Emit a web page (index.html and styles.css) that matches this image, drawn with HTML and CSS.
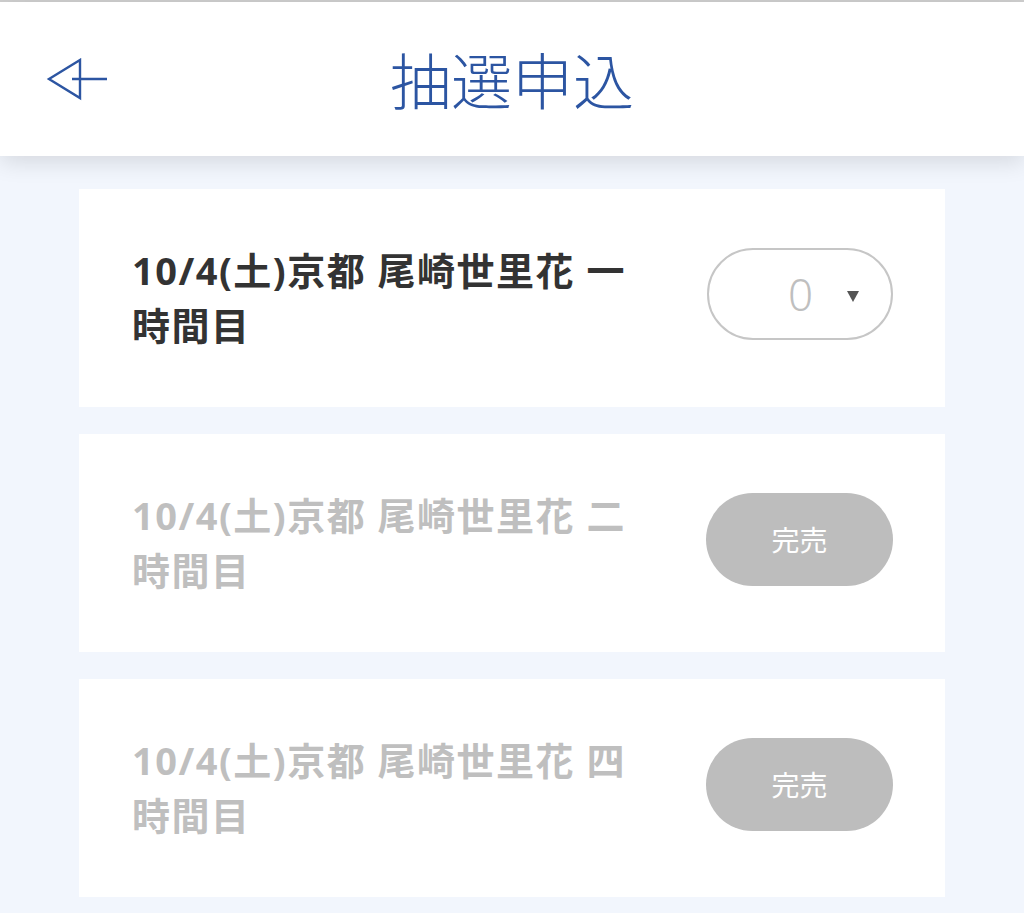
FILE: index.html
```html
<!DOCTYPE html>
<html lang="ja">
<head>
<meta charset="utf-8">
<link rel="stylesheet" href="styles.css">
</head>
<body>
<div class="topline"></div>
<header class="header">
  <button class="back" aria-label="戻る">
    <svg width="64" height="44" viewBox="0 0 64 44" fill="none" stroke="#2c55a2" stroke-width="2.4" stroke-linejoin="miter">
      <polygon points="3,21 34,2 34,40"/>
      <line x1="26" y1="21" x2="61" y2="21"/>
    </svg>
  </button>
  <h1 class="title">抽選申込</h1>
</header>
<main class="list">
  <section class="card">
    <p class="name">10/4(土)京都 尾崎世里花 一時間目</p>
    <div class="select"><span class="num">0</span><span class="caret"></span></div>
  </section>
  <section class="card disabled">
    <p class="name">10/4(土)京都 尾崎世里花 二時間目</p>
    <div class="sold">完売</div>
  </section>
  <section class="card disabled">
    <p class="name">10/4(土)京都 尾崎世里花 四時間目</p>
    <div class="sold">完売</div>
  </section>
</main>
</body>
</html>
```
FILE: styles.css
```css
html, body {
  margin: 0;
  padding: 0;
}
body {
  background: #f2f6fd;
  font-family: "Noto Sans CJK JP", "Noto Sans", sans-serif;
  width: 1024px;
  height: 913px;
  overflow: hidden;
}
.topline {
  height: 2px;
  background: #cfcfcf;
}
.header {
  position: relative;
  z-index: 2;
  height: 154px;
  background: #fff;
  box-shadow: 0 6px 22px rgba(0, 0, 0, 0.12);
  display: flex;
  align-items: center;
  justify-content: center;
}
.back {
  position: absolute;
  left: 46px;
  top: 56px;
  padding: 0;
  border: 0;
  background: none;
  width: 64px;
  height: 44px;
}
.back svg { display: block; }
.title {
  margin: 0;
  margin-top: -2px;
  font-size: 61px;
  font-weight: 300;
  color: #2c55a2;
  letter-spacing: 0;
  line-height: 1;
}
.list {
  padding: 33px 79px 0;
  display: flex;
  flex-direction: column;
  gap: 27px;
}
.card {
  background: #fff;
  height: 218px;
  box-sizing: border-box;
  padding: 0 52px 0 53px;
  display: flex;
  align-items: center;
}
.name {
  margin: 0;
  width: 510px;
  font-family: "Noto Sans", "Noto Sans CJK JP", sans-serif;
  font-size: 38px;
  font-weight: 700;
  letter-spacing: 1.5px;
  line-height: 55px;
  color: #333;
}
.disabled .name {
  color: #bfbfbf;
}
.select {
  margin-left: auto;
  margin-top: -8px;
  width: 186px;
  height: 92px;
  box-sizing: border-box;
  border: 2px solid #c6c6c6;
  border-radius: 46px;
  display: flex;
  align-items: center;
  justify-content: flex-end;
  padding-right: 32px;
}
.num {
  font-family: "Noto Sans", sans-serif;
  font-weight: 300;
  font-size: 44px;
  color: #bfbfbf;
  line-height: 1;
  margin-right: 34px;
}
.caret {
  width: 0;
  height: 0;
  border-left: 6px solid transparent;
  border-right: 6px solid transparent;
  border-top: 11px solid #555;
  margin-top: 4px;
}
.sold {
  margin-left: auto;
  margin-top: -8px;
  width: 187px;
  height: 93px;
  border-radius: 47px;
  background: #bdbdbd;
  color: #fff;
  font-size: 28px;
  display: flex;
  align-items: center;
  justify-content: center;
}
```
